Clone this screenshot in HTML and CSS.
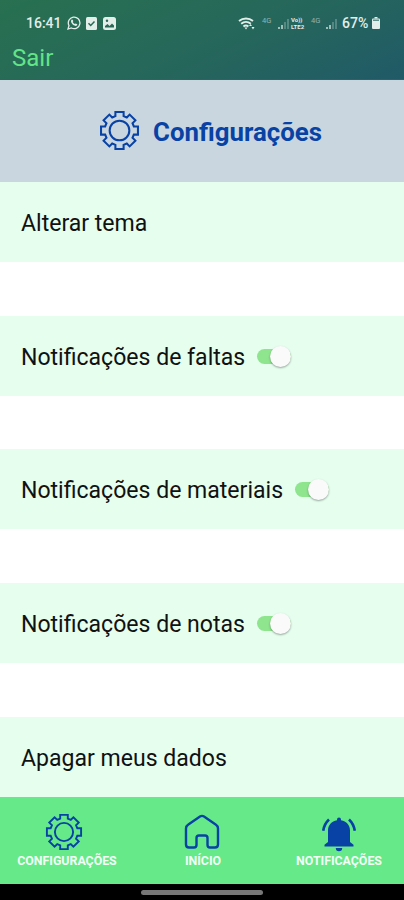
FILE: index.html
```
<!DOCTYPE html>
<html lang="pt-BR">
<head>
  <meta charset="UTF-8">
  <meta name="viewport" content="width=device-width, initial-scale=1.0">
  <title>Configurações</title>
  <link rel="stylesheet" href="styles.css">
</head>
<body>
  <svg class="sprite" aria-hidden="true">
    <symbol id="gear" viewBox="-20 -20 40 40">
      <path d="M-4-14L-4-18 4-18 4-14 7.1-12.7 9.9-15.5 15.5-9.9 12.7-7.1 14-4 18-4 18 4 14 4 12.7 7.1 15.5 9.9 9.9 15.5 7.1 12.7 4 14 4 18-4 18-4 14-7.1 12.7-9.9 15.5-15.5 9.9-12.7 7.1-14 4-18 4-18-4-14-4-12.7-7.1-15.5-9.9-9.9-15.5-7.1-12.7z"/>
      <circle r="9.6"/>
    </symbol>
    <symbol id="signal" viewBox="0 0 11 11">
      <path d="M0 11V9h2v2zM3 11V7h2v4z"/>
      <path d="M6 11V4h2v7zM9 11V1h2v10z" opacity=".4"/>
    </symbol>
  </svg>

  <header class="top">
    <div class="status">
      <div class="status-left">
        <span class="clock">16:41</span>
        <svg class="whats" viewBox="0 0 14 14">
          <path d="M1 13l1-3.4a5.8 5.8 0 1 1 2.4 2.4z" fill="none" stroke="currentColor" stroke-width="1.3"/>
          <path d="M4.4 3.9c.5-.6 1.1-.5 1.4.2l.5 1.2-.6.8c.5.9 1.2 1.6 2.2 2l.8-.7 1.5.8c.2.9-.6 1.7-1.6 1.7-2.5-.3-4.7-2.7-4.6-4.800z"/>
        </svg>
        <svg class="check" viewBox="0 0 11 13">
          <rect width="11" height="13" rx="1.5"/>
          <path d="M2.5 6.3l2.2 2.2 3.8-4" fill="none" stroke="#286854" stroke-width="1.5"/>
        </svg>
        <svg class="photo" viewBox="0 0 13 13">
          <rect width="13" height="13" rx="2.5"/>
          <path d="M2 10.500V9l2.500-2 2 2L9 6.500l2 2v2z" fill="#286854"/>
          <circle cx="4" cy="3.8" r="1.2" fill="#286854"/>
        </svg>
      </div>
      <div class="status-right">
        <svg class="wifi" viewBox="0 0 17 13">
          <path d="M1 4a11 11 0 0 1 14 0M3.2 6.700a7.5 7.5 0 0 1 9.6 0M5.4 9.400a4 4 0 0 1 5 0" fill="none" stroke="currentColor" stroke-width="1.9"/>
          <path d="M6.500 10.500h3L8 12.500zM11 9l1.500-2L14 9zM13.500 10h3L15 12.500z"/>
        </svg>
        <span class="net">4G</span>
        <svg class="signal"><use href="#signal"/></svg>
        <span class="volte"><span>Vo))</span><span>LTE2</span></span>
        <span class="net net-two">4G</span>
        <svg class="signal signal-two"><use href="#signal"/></svg>
        <span class="percent">67%</span>
        <svg class="battery" viewBox="0 0 8 12">
          <path d="M2.5 0h3v1.5h-3z"/>
          <rect y="1.5" width="8" height="10.5" rx="1"/>
          <path d="M1 2.500h6V4H1z" fill="#5d8f88"/>
        </svg>
      </div>
    </div>
    <a class="logout" href="#">Sair</a>
  </header>

  <div class="title">
    <svg class="title-icon"><use href="#gear"/></svg>
    <h1>Configurações</h1>
  </div>

  <main class="options">
    <div class="option">Alterar tema</div>
    <div class="option">Notificações de faltas <span class="switch" role="switch" aria-checked="true"></span></div>
    <div class="option">Notificações de materiais <span class="switch" role="switch" aria-checked="true"></span></div>
    <div class="option">Notificações de notas <span class="switch" role="switch" aria-checked="true"></span></div>
    <div class="option">Apagar meus dados</div>
  </main>

  <nav class="menu">
    <a class="menu-item" href="#">
      <svg class="menu-icon gear"><use href="#gear"/></svg>
      <span>CONFIGURAÇÕES</span>
    </a>
    <a class="menu-item" href="#">
      <svg class="menu-icon home" viewBox="0 0 38 38">
        <path d="M3 15.500Q3 13 5 11.700L17 3.500Q19 2.200 21 3.500L33 11.700Q35 13 35 15.500V31.500Q35 34.500 32 34.500H27Q24.500 34.500 24.500 32V25Q24.500 22.500 22 22.500H16Q13.500 22.500 13.500 25V32Q13.500 34.500 11 34.500H6Q3 34.500 3 31.500Z"/>
      </svg>
      <span>INÍCIO</span>
    </a>
    <a class="menu-item" href="#">
      <svg class="menu-icon bell" viewBox="0 0 38 38">
        <path d="M17 6.500a2 2 0 0 1 4 0v.8c5.500 1 9 5 9 10.200V29l3.500 2.700V33.500h-29V31.700L8 29V17.500c0-5.200 3.500-9.200 9-10.200zM15.800 35h6.400a3.200 3.200 0 0 1-6.400 0z"/>
        <path class="ring" d="M9 6.500Q4.200 11 3.200 17.800M29 6.500Q33.800 11 34.800 17.800"/>
      </svg>
      <span>NOTIFICAÇÕES</span>
    </a>
  </nav>
  <footer class="system"><span class="handle"></span></footer>
</body>
</html>
```
FILE: styles.css
```
* {
  box-sizing: border-box;
}

body {
  margin: 0;
  height: 900px;
  display: flex;
  flex-direction: column;
  overflow: hidden;
  font-family: Roboto, sans-serif;
  background-color: #fff;
}

a {
  text-decoration: none;
}

.sprite {
  display: none;
}

.top {
  height: 80px;
  padding: 14px 24px 0 26px;
  background: linear-gradient(155deg, #287050 0%, #26685a 50%, #205a67 100%);
  border-bottom: 1px solid #137064;
}

.status,
.status-left,
.status-right {
  display: flex;
  align-items: center;
}

.status {
  justify-content: space-between;
  height: 18px;
  color: #e2eeea;
}

.status svg {
  fill: currentColor;
}

.clock {
  width: 41px;
  font-size: 14px;
  font-weight: 500;
}

.whats {
  width: 14px;
  height: 14px;
}

.check {
  width: 11px;
  height: 13px;
  margin-left: 5px;
}

.photo {
  width: 13px;
  height: 13px;
  margin-left: 6px;
}

.wifi {
  width: 17px;
  height: 13px;
}

.net {
  width: 10px;
  margin: -6px 6px 0 7px;
  font-size: 7.5px;
  opacity: 0.55;
}

.signal {
  width: 11px;
  height: 11px;
  opacity: 0.65;
}

.volte {
  display: flex;
  flex-direction: column;
  width: 16px;
  margin-left: 2px;
  font-size: 6px;
  font-weight: 700;
  line-height: 7px;
}

.net-two {
  margin-left: 4px;
  margin-right: 5px;
}

.signal-two {
  margin-right: 5px;
}

.percent {
  width: 28px;
  font-size: 14px;
  font-weight: 500;
}

.battery {
  width: 8px;
  height: 12px;
  margin-left: 2px;
}

.logout {
  display: block;
  margin: 11px 0 0 -14px;
  font-size: 24px;
  line-height: 30px;
  color: #62e588;
}

.title {
  height: 102px;
  display: flex;
  justify-content: center;
  align-items: center;
  gap: 13px;
  padding: 0 0 2px 17px;
  background-color: #c9d6df;
}

.title-icon {
  width: 41px;
  height: 41px;
  fill: none;
  stroke: #0842a5;
  stroke-width: 2;
}

.title h1 {
  margin: 4px 0 0;
  font-size: 25.8px;
  font-weight: 700;
  color: #0842a5;
}

.options {
  height: 614.5px;
  display: flex;
  flex-direction: column;
  justify-content: space-between;
}

.option {
  height: 80px;
  display: flex;
  align-items: center;
  padding: 3px 21px 0;
  font-size: 23.05px;
  color: #111;
  background-color: #e5feee;
}

.switch {
  display: flex;
  align-items: center;
  justify-content: flex-end;
  width: 34px;
  height: 15px;
  margin: -2px 0 0 12px;
  border-radius: 8px;
  background-color: #8ee58e;
}

.switch::after {
  content: "";
  width: 21px;
  height: 21px;
  border-radius: 50%;
  background-color: #fafafa;
  box-shadow: 0 1px 2px rgba(0, 0, 0, 0.35);
}

.menu {
  height: 87.5px;
  display: grid;
  grid-template-columns: repeat(3, 136px);
  margin-left: -1px;
  padding-top: 16px;
  background-color: #66e989;
}

.menu-item {
  display: flex;
  flex-direction: column;
  align-items: center;
  font-size: 12.35px;
  font-weight: 700;
  line-height: 16px;
  color: #f3fff6;
}

.menu-icon {
  width: 38px;
  height: 38px;
  margin-bottom: 2px;
  fill: none;
  stroke: #0842a5;
  stroke-width: 2;
}

.gear {
  margin-right: 6px;
}

.home {
  margin-right: 3px;
  stroke-width: 2.4;
}

.bell {
  overflow: visible;
  fill: #0842a5;
  stroke: none;
}

.ring {
  fill: none;
  stroke: #0842a5;
  stroke-width: 2.6;
}

.system {
  height: 16px;
  display: flex;
  justify-content: center;
  align-items: center;
  background-color: #000;
}

.handle {
  width: 122px;
  height: 5px;
  border-radius: 3px;
  background-color: #777;
}
```
